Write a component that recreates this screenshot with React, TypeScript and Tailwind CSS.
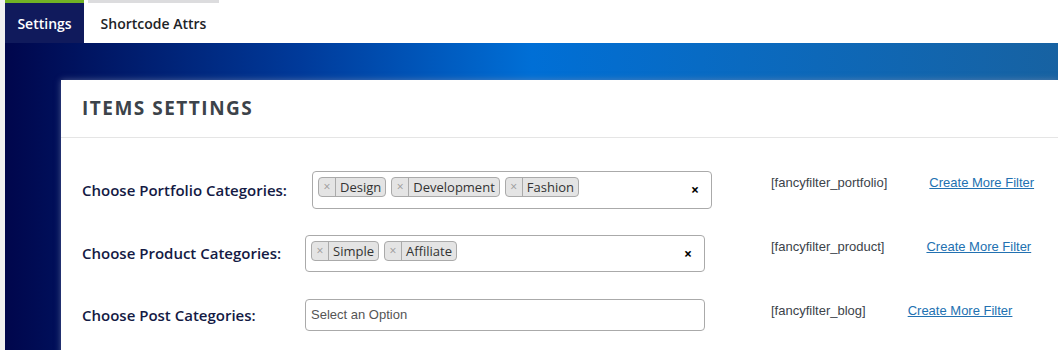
import React from 'react'

type Row = {
  label: string
  labelWidth: string
  tags: string[]
  height: string
  shortcode: string
}

const rows: Row[] = [
  {
    label: 'Choose Portfolio Categories:',
    labelWidth: 'w-[230px]',
    tags: ['Design', 'Development', 'Fashion'],
    height: 'h-[38px]',
    shortcode: '[fancyfilter_portfolio]',
  },
  {
    label: 'Choose Product Categories:',
    labelWidth: 'w-[223px]',
    tags: ['Simple', 'Affiliate'],
    height: 'h-[37px]',
    shortcode: '[fancyfilter_product]',
  },
  {
    label: 'Choose Post Categories:',
    labelWidth: 'w-[223px]',
    tags: [],
    height: 'h-[32px]',
    shortcode: '[fancyfilter_blog]',
  },
]

function Tag({ text }: { text: string }) {
  return (
    <span className="flex h-[20px] items-center rounded-[4px] border border-[#aaaaaa] bg-[#e4e4e4] text-[13px] leading-none text-[#333]">
      <span className="flex h-full w-[17px] items-center justify-center border-r border-[#aaaaaa] text-[12px] text-[#999]">
        ×
      </span>
      <span className="px-[4px]">{text}</span>
    </span>
  )
}

function MultiSelect({ tags, height }: { tags: string[]; height: string }) {
  return (
    <div className={`relative w-[400px] ${height} rounded-[4px] border border-[#aaaaaa] bg-white`}>
      {tags.length > 0 ? (
        <>
          <div className="flex gap-[5px] px-[5px] pt-[5px]">
            {tags.map((t) => (
              <Tag key={t} text={t} />
            ))}
          </div>
          <span className="absolute right-[12px] top-[7px] text-[14px] font-bold text-black">×</span>
        </>
      ) : (
        <div className="flex h-full items-center px-[5px] font-['Liberation_Sans',Arial,sans-serif] text-[13px] text-[#555]">
          Select an Option
        </div>
      )}
    </div>
  )
}

export default function App() {
  return (
    <div className="flex h-[350px] w-full flex-col overflow-hidden bg-[#f0f0f1] pl-[5px] font-['Open_Sans',sans-serif]">
      <div className="flex h-[43px] shrink-0 gap-[4px] bg-white">
        <div className="flex w-[79px] items-center justify-center border-t-[3px] border-[#71b324] bg-[#101a5c] text-[14px] font-semibold text-white">
          Settings
        </div>
        <div className="flex w-[131px] items-center justify-center border-t-[3px] border-[#dcdcde] bg-white text-[14px] font-semibold text-[#1d2327]">
          Shortcode Attrs
        </div>
      </div>

      <div className="flex-1 bg-[linear-gradient(to_right,#00064c_0%,#003a9a_28%,#006fd6_50%,#0a6ac0_70%,#1762a2_100%)] pl-[56px] pt-[37px]">
        <div className="h-full bg-white shadow-[0_0_6px_rgba(130,140,170,0.6)]">
          <div className="flex h-[58px] items-center border-b border-[#e5e5e5] px-[21px]">
            <h2 className="text-[19px] font-bold tracking-[1.5px] text-[#3c434a]">ITEMS SETTINGS</h2>
          </div>
          <div className="pl-[21px] pt-[33px]">
            {rows.map((r) => (
              <div key={r.label} className="flex h-[64px] items-start">
                <div className="flex w-[689px] items-center">
                  <label className={`${r.labelWidth} text-[15px] font-semibold text-[#141a44]`}>{r.label}</label>
                  <MultiSelect tags={r.tags} height={r.height} />
                </div>
                <div className="flex gap-[42px] pt-[2px] font-['Liberation_Sans',Arial,sans-serif] text-[13px]">
                  <span className="text-[#3c434a]">{r.shortcode}</span>
                  <a href="#" className="text-[#2271b1] underline">
                    Create More Filter
                  </a>
                </div>
              </div>
            ))}
          </div>
        </div>
      </div>
    </div>
  )
}
